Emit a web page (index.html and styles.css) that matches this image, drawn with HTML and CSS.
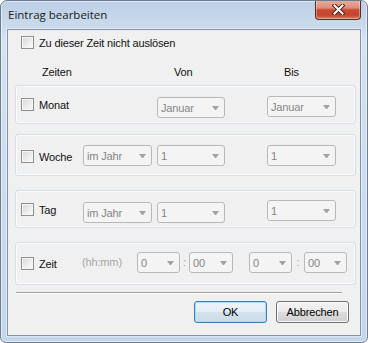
FILE: index.html
```html
<!DOCTYPE html>
<html lang="de">
<head>
    <meta charset="UTF-8">
    <title>Eintrag bearbeiten</title>
    <link rel="stylesheet" href="styles.css">
</head>
<body>
    <div class="window">
        <div class="titlebar">
            <span class="title">Eintrag bearbeiten</span>
            <div class="close-btn">
                <svg width="13" height="11" viewBox="0 0 13 11">
                    <path d="M2.5 1.5 L10.5 9.5 M10.5 1.5 L2.5 9.5" stroke="#4b2219" stroke-width="4" stroke-linecap="square" fill="none"/>
                    <path d="M2.5 1.5 L10.5 9.5 M10.5 1.5 L2.5 9.5" stroke="#ffffff" stroke-width="2" stroke-linecap="square" fill="none"/>
                </svg>
            </div>
        </div>

        <div class="client">
            <!-- oberste Option -->
            <div class="top-row">
                <span class="checkbox"></span>
                <span>Zu dieser Zeit nicht auslösen</span>
            </div>

            <!-- Spaltenköpfe -->
            <div class="headers">
                <span class="h-zeiten">Zeiten</span>
                <span class="h-von">Von</span>
                <span class="h-bis">Bis</span>
            </div>

            <!-- Monat -->
            <div class="group group-monat">
                <div class="check-cell"><span class="checkbox"></span>Monat</div>
                <div class="combo combo-von">Januar</div>
                <div class="combo combo-bis">Januar</div>
            </div>

            <!-- Woche -->
            <div class="group group-woche">
                <div class="check-cell"><span class="checkbox"></span>Woche</div>
                <div class="combo combo-art">im Jahr</div>
                <div class="combo combo-von">1</div>
                <div class="combo combo-bis">1</div>
            </div>

            <!-- Tag -->
            <div class="group group-tag">
                <div class="check-cell"><span class="checkbox"></span>Tag</div>
                <div class="combo combo-art">im Jahr</div>
                <div class="combo combo-von">1</div>
                <div class="combo combo-bis">1</div>
            </div>

            <!-- Zeit -->
            <div class="group group-zeit">
                <div class="check-cell"><span class="checkbox"></span>Zeit</div>
                <span class="hint">(hh:mm)</span>
                <div class="combo combo-hh">0</div>
                <span class="colon">:</span>
                <div class="combo combo-mm">00</div>
                <div class="combo combo-hh combo-bis-start">0</div>
                <span class="colon colon-wide">:</span>
                <div class="combo combo-mm2">00</div>
            </div>

            <div class="separator"></div>

            <div class="buttons">
                <button class="btn btn-default">OK</button>
                <button class="btn">Abbrechen</button>
            </div>
        </div>
    </div>
</body>
</html>
```

FILE: styles.css
```css
body {
    margin: 0;
    font-family: "Liberation Sans", Arial, sans-serif;
    font-size: 11px;
    letter-spacing: -0.15px;
    color: #111;
    background: #fff;
}
.window {
    width: 368px;
    height: 343px;
    box-sizing: border-box;
    border: 1px solid #6b7c90;
    border-radius: 7px 7px 6px 6px;
    background: linear-gradient(#bccfe6 0%, #d4e2f1 12%, #cadbee 60%, #c3d6ec 100%);
    box-shadow: inset 0 0 0 1px rgba(255, 255, 255, 0.55);
    display: flex;
    flex-direction: column;
    overflow: hidden;
}
.titlebar {
    height: 28px;
    flex: none;
    display: flex;
    justify-content: space-between;
    align-items: flex-start;
    padding-left: 7px;
}
.title {
    font-family: "Open Sans", "Noto Sans", sans-serif;
    font-size: 11.5px;
    letter-spacing: 0;
    line-height: 28px;
    color: #1b1b1b;
}
.close-btn {
    width: 46px;
    height: 20px;
    box-sizing: border-box;
    margin-top: -1px;
    margin-right: 6px;
    border: 1px solid #5e2b20;
    border-top: none;
    border-radius: 0 0 4px 4px;
    background: linear-gradient(#eab0a2 0%, #de8a77 42%, #c94a33 52%, #c4432c 78%, #dc7a62 100%);
    box-shadow: inset 0 0 0 1px rgba(255, 255, 255, 0.35);
    display: flex;
    align-items: center;
    justify-content: center;
}
.client {
    flex: 1;
    margin: 0 6px 6px 6px;
    border: 1px solid #8394a8;
    background: #f0f0f0;
    box-shadow: 0 0 0 1px rgba(255, 255, 255, 0.45);
    display: flex;
    flex-direction: column;
}
.checkbox {
    width: 13px;
    height: 13px;
    box-sizing: border-box;
    border: 1px solid #8e8f8f;
    background: linear-gradient(135deg, #d6d6d6 0%, #eeeeee 60%, #fafafa 100%);
    box-shadow: inset 0 0 0 1px #f6f6f6;
    flex: none;
}
.top-row {
    display: flex;
    align-items: center;
    gap: 5px;
    height: 13px;
    padding: 6px 0 0 13px;
}
.headers {
    display: flex;
    height: 13px;
    line-height: 13px;
    margin-top: 17px;
    padding-left: 34px;
}
.h-zeiten { width: 132px; }
.h-von { width: 110px; }

.group {
    box-sizing: border-box;
    width: 341px;
    margin-left: 7px;
    border: 1px solid #d5dfe5;
    border-radius: 3px;
    box-shadow: inset 0 0 0 1px #fbfbfb;
    padding-left: 5px;
    display: grid;
    grid-template-columns: 62px 74px 110px 69px;
    align-items: start;
}
.group-monat { height: 39px; padding-top: 11px; margin-top: 6px; }
.group-woche { height: 42px; padding-top: 10px; margin-top: 10px; }
.group-tag { height: 38px; padding-top: 11px; margin-top: 14px; }
.group-zeit {
    height: 43px;
    padding-top: 9px;
    margin-top: 14px;
    display: flex;
}
.check-cell {
    display: flex;
    align-items: center;
    gap: 5px;
    height: 13px;
    grid-column: 1;
}
.group-monat .check-cell,
.group-tag .check-cell { margin-top: 1px; }
.group-woche .check-cell,
.group-zeit .check-cell { margin-top: 5px; }
.group-zeit .check-cell { width: 61px; }

.combo {
    box-sizing: border-box;
    height: 21px;
    border: 1px solid #b7babd;
    border-radius: 3px;
    background: #f4f4f4;
    color: #858585;
    padding-left: 3px;
    display: flex;
    align-items: center;
}
.combo::after {
    content: "";
    margin-left: auto;
    margin-right: 5px;
    width: 1px;
    height: 0;
    border-left: 3px solid transparent;
    border-right: 3px solid transparent;
    border-top: 4px solid #a2a2a2;
}
.combo-art { grid-column: 2; width: 69px; }
.combo-von { grid-column: 3; width: 68px; }
.combo-bis { grid-column: 4; width: 69px; }
.group-monat .combo-bis { margin-top: -1px; }
.group-tag .combo-bis { margin-top: -2px; }

.hint {
    width: 55px;
    line-height: 21px;
    color: #a6a6a6;
}
.combo-hh { width: 43px; }
.combo-mm { width: 44px; }
.combo-mm2 { width: 43px; }
.combo-bis-start { margin-left: 16px; }
.colon {
    width: 9px;
    text-align: center;
    line-height: 21px;
    color: #9a9a9a;
}
.colon-wide { width: 12px; }

.separator {
    width: 326px;
    margin: 7px 0 0 8px;
    border-top: 1px solid #a0a0a0;
    border-bottom: 1px solid #ffffff;
}
.buttons {
    display: flex;
    justify-content: flex-end;
    gap: 9px;
    margin: 7px 11px 0 0;
}
.btn {
    width: 73px;
    height: 22px;
    box-sizing: border-box;
    border: 1px solid #707070;
    border-radius: 3px;
    background: linear-gradient(#f2f2f2 0%, #ebebeb 48%, #dddddd 52%, #cfcfcf 100%);
    box-shadow: inset 0 0 0 1px #fbfbfb;
    font-family: "Liberation Sans", Arial, sans-serif;
    font-size: 11px;
    letter-spacing: -0.15px;
    color: #000;
    padding: 0;
}
.btn-default {
    border-color: #3c7fb1;
    background: linear-gradient(#eef5fa 0%, #e3edf4 48%, #d4e3ee 52%, #c9dbe8 100%);
    box-shadow: inset 0 0 0 1px #a9dcf5;
}
```
